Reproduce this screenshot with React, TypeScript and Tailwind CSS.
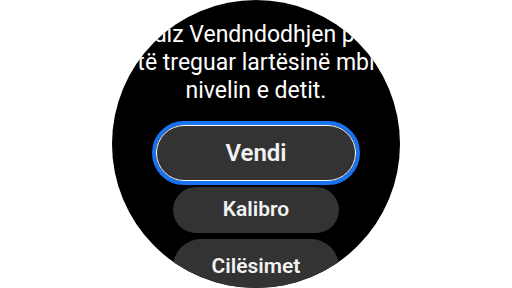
export default function App() {
  return (
    <div className="w-[512px] h-[288px] bg-white flex items-center justify-center font-['Roboto',sans-serif]">
      <div className="w-[288px] h-[288px] shrink-0 rounded-full bg-black overflow-hidden flex flex-col items-center pt-[21px]">
        <p className="w-[420px] shrink-0 text-center text-white text-[23px] leading-[28px] whitespace-nowrap">
          Ndiz Vendndodhjen për
          <br />
          të treguar lartësinë mbi
          <br />
          nivelin e detit.
        </p>

        <div className="mt-[16px] w-[208px] h-[64px] shrink-0 rounded-full border-[4px] border-[#1872f0]">
          <div className="w-full h-full rounded-full border border-white bg-[#333333] flex items-center justify-center">
            <span className="text-[24px] font-semibold text-[#f2f2f2]">Vendi</span>
          </div>
        </div>

        <div className="mt-[2px] w-[166px] h-[46px] shrink-0 rounded-full bg-[#333333] flex items-center justify-center">
          <span className="text-[21px] font-semibold text-[#f2f2f2]">Kalibro</span>
        </div>

        <div className="mt-[6px] w-[166px] h-[56px] shrink-0 rounded-full bg-[#333333] flex items-center justify-center">
          <span className="text-[21px] font-semibold text-[#f2f2f2]">Cilësimet</span>
        </div>
      </div>
    </div>
  );
}
